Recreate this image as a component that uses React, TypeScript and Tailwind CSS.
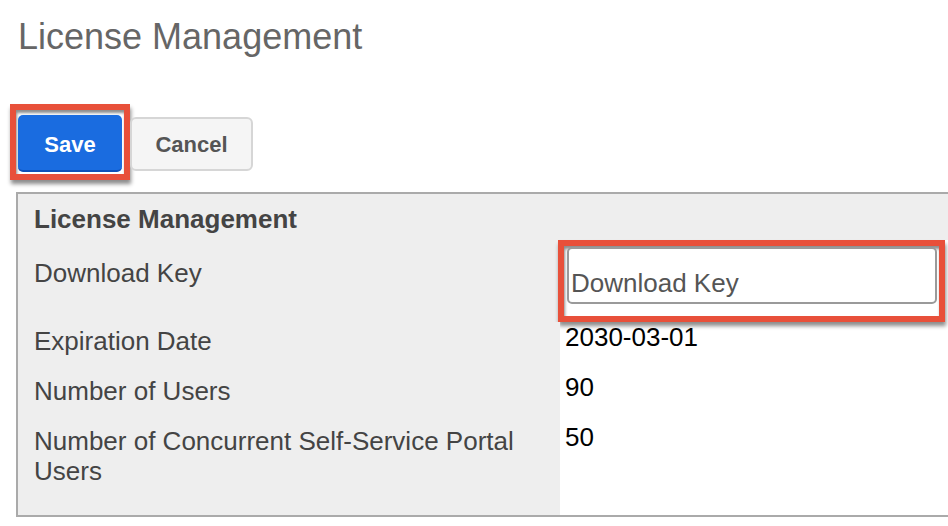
import React from "react"

const highlight =
  "border-[6px] border-[#e8503a] shadow-[1px_4px_4px_rgba(0,0,0,0.45),inset_1px_3px_3px_rgba(0,0,0,0.45)]"

const rows = [
  { label: "Expiration Date", value: "2030-03-01" },
  { label: "Number of Users", value: "90" },
  { label: "Number of Concurrent Self-Service Portal Users", value: "50" },
]

export default function App() {
  return (
    <div className="w-[948px] h-[526px] overflow-hidden bg-white font-['Liberation_Sans',Arial,sans-serif]">
      {/* Page title */}
      <h1 className="pl-[18px] pt-[16px] text-[36px] leading-[41px] font-normal text-[#666]">
        License Management
      </h1>

      {/* Actions */}
      <div className="flex items-start ml-[10px] mt-[47px]">
        <div className={`${highlight} w-[120px] h-[76px] pl-[2px] pt-[5px]`}>
          <button className="w-[104px] h-[57px] pt-[3px] rounded-[5px] bg-[#1a6ce0] border-b-2 border-[#0e50b8]
            text-white font-bold text-[22px]">
            Save
          </button>
        </div>
        <button className="mt-[13px] w-[123px] h-[54px] rounded-[6px] bg-[#f5f5f5] border-2 border-[#d6d6d6]
          text-[#555] font-bold text-[22px]">
          Cancel
        </button>
      </div>

      {/* Panel */}
      <div className="mt-[12px] ml-[16px] w-[950px] border-2 border-[#aaa] text-[26px] leading-[30px]">
        <div className="bg-[#eee] pl-[16px] pt-[10px] pb-[6px] font-bold text-[#444]">
          License Management
        </div>

        <div className="flex">
          <div className="w-[542px] shrink-0 bg-[#eee] pl-[16px] pr-[16px] pt-[18px] text-[#444]">
            Download Key
          </div>
          <div className="flex-1 pl-[5px]">
            <div className={`${highlight} ml-[-7px] w-[387px] h-[82px] pl-[3px] pt-[1px]`}>
              <input
                placeholder="Download Key"
                className="w-[370px] h-[57px] border-2 border-[#9a9a9a] rounded-[5px] pl-[2px] pt-[16px] bg-white
                  text-[26px] text-[#555] placeholder:text-[#555] outline-none"
              />
            </div>
          </div>
        </div>

        {rows.map((r, i) => (
          <div key={r.label} className="flex">
            <div
              className={`w-[542px] shrink-0 bg-[#eee] pl-[16px] pr-[16px] pt-[4px] text-[#444] ${
                i === rows.length - 1 ? "pb-[29px]" : "pb-[16px]"
              }`}
            >
              {r.label}
            </div>
            <div className="flex-1 pl-[5px] text-black">{r.value}</div>
          </div>
        ))}
      </div>
    </div>
  )
}
